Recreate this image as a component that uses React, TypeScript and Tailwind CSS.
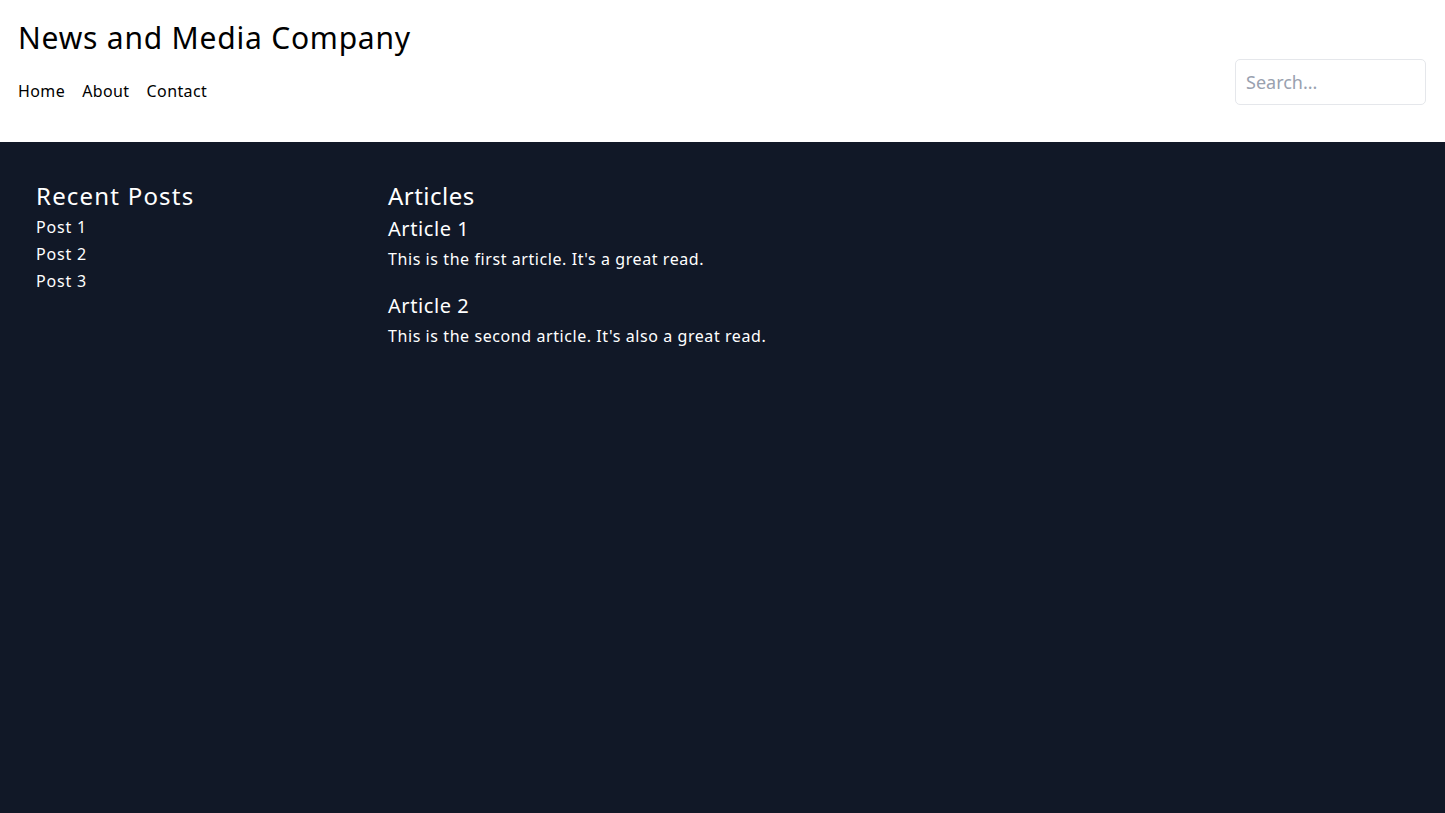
import React from "react";

export default function App() {
  return (
    <div
      className="min-h-[813px] flex flex-col bg-[#111827] tracking-[0.036em]"
      style={{ fontFamily: '"Noto Sans", "Liberation Sans", Arial, sans-serif' }}
    >
      <header className="h-[142px] bg-white px-[18px] pt-5 flex justify-between items-start">
        <div className="flex flex-col">
          <h1 className="text-3xl leading-9 text-black tracking-[0.026em]">News and Media Company</h1>
          <nav className="mt-[23px] flex gap-[17px] text-base leading-6 text-black tracking-[0.025em]">
            <a href="#">Home</a>
            <a href="#">About</a>
            <a href="#">Contact</a>
          </nav>
        </div>
        <input
          type="text"
          placeholder="Search..."
          className="mt-[39px] mr-px w-[191px] h-[46px] pl-[10px] pr-2 py-2 text-lg border border-gray-200 rounded-[5px] text-black placeholder:text-gray-400 tracking-normal outline-none"
        />
      </header>
      <main className="flex-1 flex px-[36px] pt-[38px] text-white">
        <aside className="w-[352px] shrink-0">
          <h2 className="text-2xl leading-8 tracking-[0.05em]">Recent Posts</h2>
          <ul className="mt-[2px] text-base leading-[27px] tracking-[0.05em]">
            <li>Post 1</li>
            <li>Post 2</li>
            <li>Post 3</li>
          </ul>
        </aside>
        <section className="flex-1">
          <h2 className="text-2xl leading-8 tracking-[0.02em]">Articles</h2>
          <article className="mt-[3px]">
            <h3 className="text-xl leading-7">Article 1</h3>
            <p className="mt-1 text-base leading-6">This is the first article. It's a great read.</p>
          </article>
          <article className="mt-[21px]">
            <h3 className="text-xl leading-7">Article 2</h3>
            <p className="mt-1 text-base leading-6">This is the second article. It's also a great read.</p>
          </article>
        </section>
      </main>
    </div>
  );
}
